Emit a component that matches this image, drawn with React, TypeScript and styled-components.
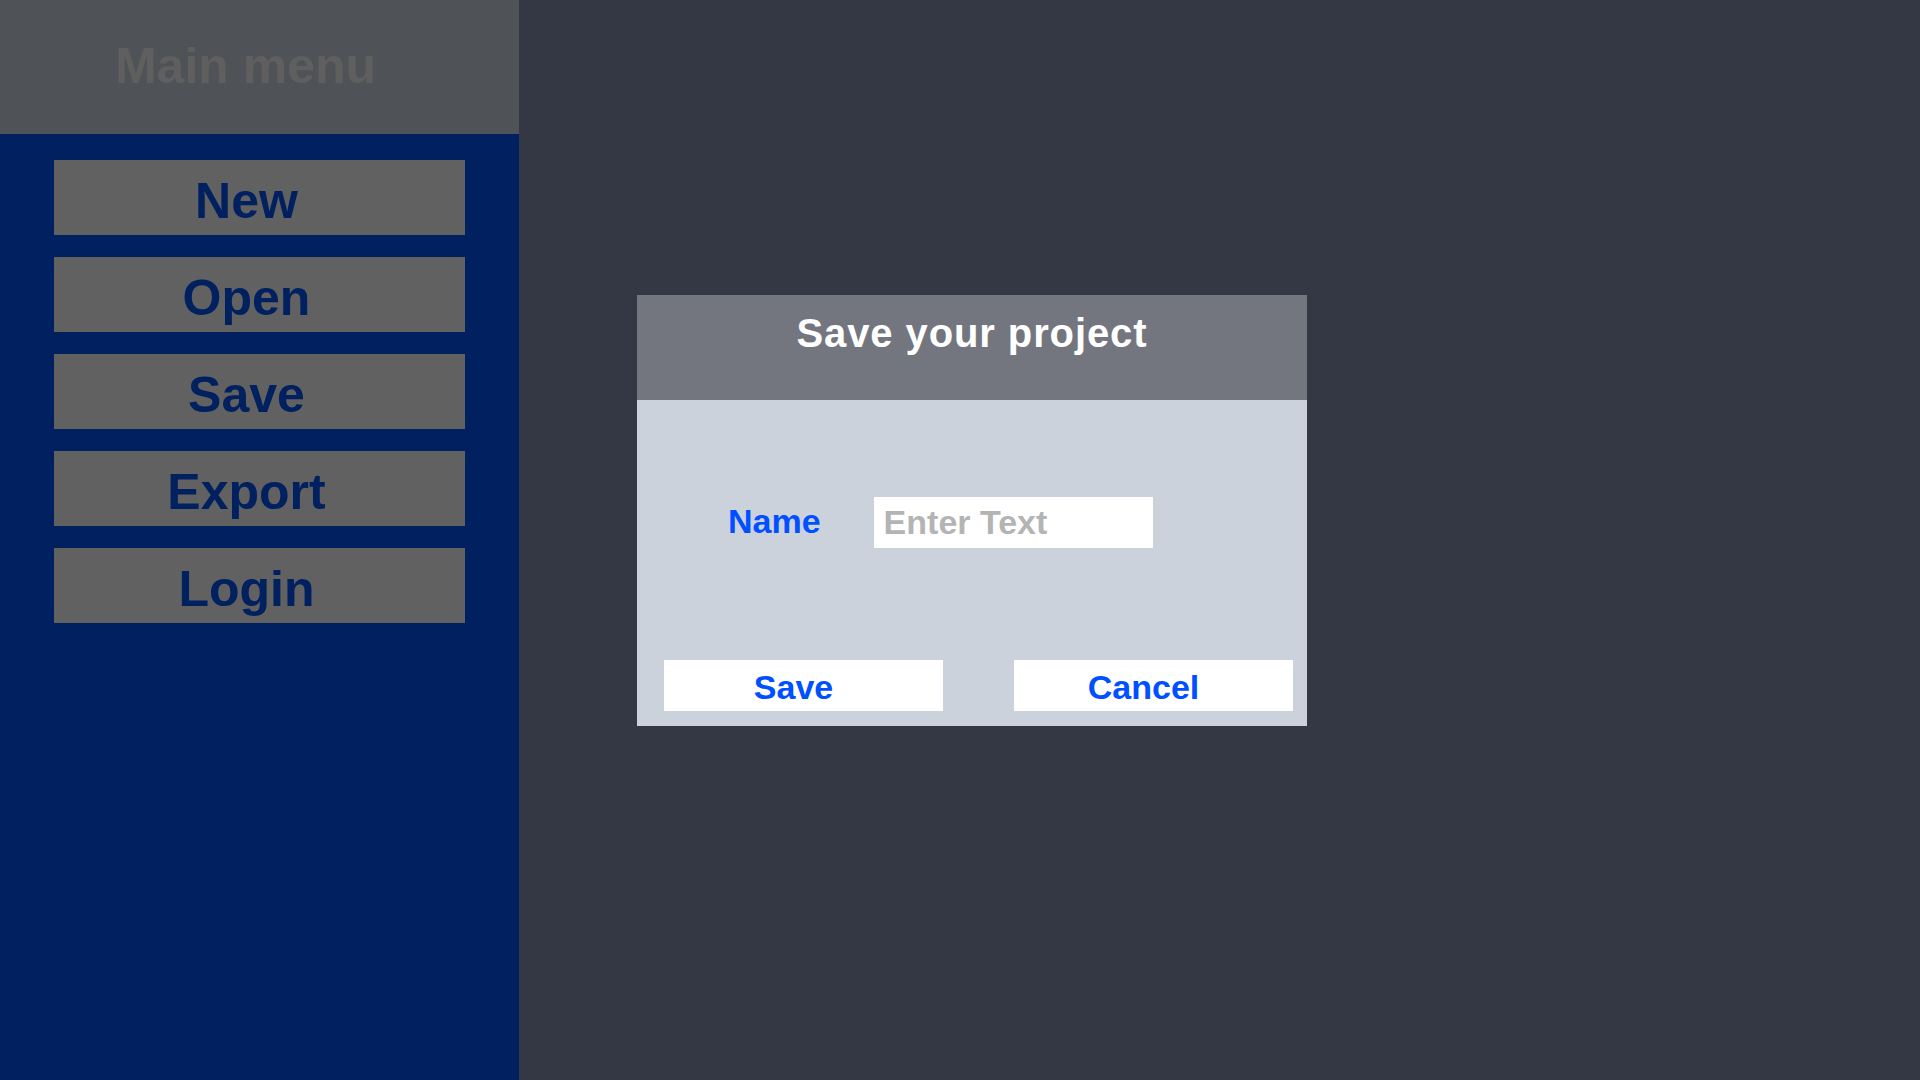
import styled, { createGlobalStyle } from "styled-components";

const GlobalStyle = createGlobalStyle`
  html, body {
    margin: 0;
    padding: 0;
  }
  body {
    font-family: "Liberation Sans", Arial, sans-serif;
  }
`;

const Screen = styled.div`
  display: flex;
  flex-direction: row;
  width: 100%;
  height: 100vh;
  overflow: hidden;
`;

const Sidebar = styled.aside`
  width: 519px;
  flex-shrink: 0;
  display: flex;
  flex-direction: column;
  background: #002060;
`;

const SidebarHeader = styled.div`
  height: 134px;
  display: flex;
  align-items: flex-start;
  justify-content: center;
  padding-right: 28px;
  box-sizing: border-box;
  background: #4f5256;
`;

const SidebarTitle = styled.h1`
  margin: 0;
  padding-top: 38px;
  font-size: 50px;
  line-height: 1.15;
  font-weight: 700;
  color: #5f5f60;
`;

const Menu = styled.nav`
  display: flex;
  flex-direction: column;
  gap: 22px;
  padding: 26px 54px;
`;

const MenuButton = styled.button`
  height: 75px;
  border: none;
  padding: 6px 26px 0 0;
  display: flex;
  align-items: center;
  justify-content: center;
  background: #616161;
  color: #002060;
  font-family: "Liberation Sans", Arial, sans-serif;
  font-size: 50px;
  font-weight: 700;
  cursor: pointer;
`;

const Workspace = styled.main`
  flex: 1;
  background: #343844;
  padding: 295px 0 0 118px;
`;

const Dialog = styled.section`
  width: 670px;
  height: 431px;
  display: flex;
  flex-direction: column;
  background: #ccd2dc;
`;

const DialogHeader = styled.header`
  height: 105px;
  flex-shrink: 0;
  display: flex;
  justify-content: center;
  padding-top: 18px;
  box-sizing: border-box;
  background: #73767f;
`;

const DialogTitle = styled.h2`
  margin: 0;
  font-size: 40px;
  line-height: 1;
  font-weight: 700;
  letter-spacing: 0.9px;
  color: #ffffff;
`;

const DialogBody = styled.div`
  flex: 1;
  display: flex;
  flex-direction: column;
  padding: 97px 14px 15px 27px;
`;

const FieldRow = styled.div`
  display: flex;
  align-items: center;
  gap: 53px;
  padding-left: 64px;
`;

const FieldLabel = styled.label`
  font-size: 34px;
  font-weight: 700;
  color: #0050ff;
  margin-top: -2px;
`;

const TextInput = styled.input`
  width: 279px;
  height: 51px;
  box-sizing: border-box;
  border: none;
  outline: none;
  padding: 0 10px;
  background: #ffffff;
  font-family: "Liberation Sans", Arial, sans-serif;
  font-size: 34px;
  font-weight: 700;
  color: #333333;

  &::placeholder {
    color: #b4b4b4;
  }
`;

const ActionRow = styled.div`
  display: flex;
  gap: 71px;
  margin-top: auto;
`;

const ActionButton = styled.button`
  width: 279px;
  height: 51px;
  border: none;
  padding: 3px 20px 0 0;
  display: flex;
  align-items: center;
  justify-content: center;
  background: #ffffff;
  color: #0050ff;
  font-family: "Liberation Sans", Arial, sans-serif;
  font-size: 34px;
  font-weight: 700;
  cursor: pointer;
`;

const menuItems = ["New", "Open", "Save", "Export", "Login"];

const App = () => (
  <>
    <GlobalStyle />
    <Screen>
      <Sidebar>
        <SidebarHeader>
          <SidebarTitle>Main menu</SidebarTitle>
        </SidebarHeader>
        <Menu>
          {menuItems.map((item) => (
            <MenuButton key={item}>{item}</MenuButton>
          ))}
        </Menu>
      </Sidebar>
      <Workspace>
        <Dialog>
          <DialogHeader>
            <DialogTitle>Save your project</DialogTitle>
          </DialogHeader>
          <DialogBody>
            <FieldRow>
              <FieldLabel htmlFor="project-name">Name</FieldLabel>
              <TextInput id="project-name" placeholder="Enter Text" />
            </FieldRow>
            <ActionRow>
              <ActionButton>Save</ActionButton>
              <ActionButton>Cancel</ActionButton>
            </ActionRow>
          </DialogBody>
        </Dialog>
      </Workspace>
    </Screen>
  </>
);

export default App;
